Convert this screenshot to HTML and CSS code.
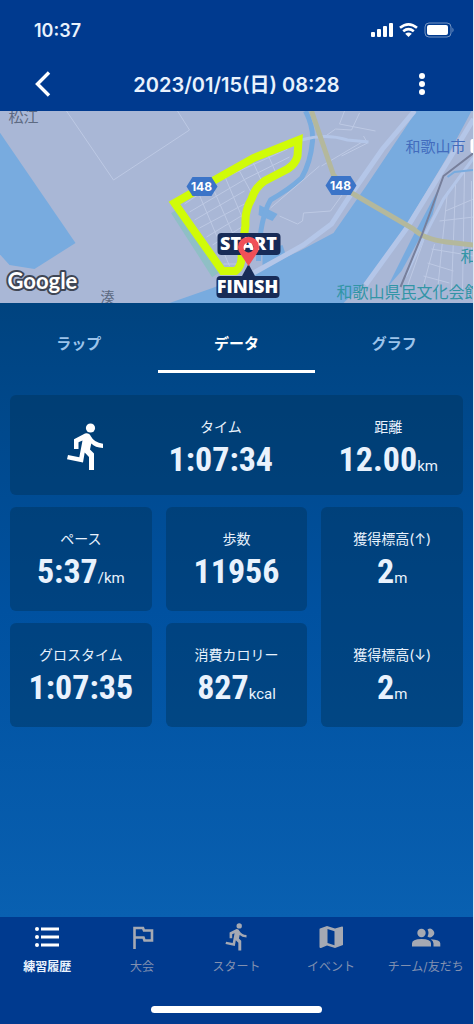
FILE: index.html
```
<!DOCTYPE html>
<html lang="ja">
<head>
    <meta charset="UTF-8">
    <meta name="viewport" content="width=device-width, initial-scale=1.0">
    <title>練習履歴</title>
    <link rel="stylesheet" href="styles.css">
</head>
<body>
    <div class="status-bar">
        <span class="clock">10:37</span>
        <svg class="status-icons" viewBox="0 0 84 16" aria-hidden="true">
            <g fill="#fff">
                <rect x="0" y="10" width="4" height="5" rx="1"/>
                <rect x="6" y="7" width="4" height="8" rx="1"/>
                <rect x="12" y="4" width="4" height="11" rx="1"/>
                <rect x="18" y="1" width="4" height="14" rx="1"/>
                <rect x="56" y="3" width="21" height="10" rx="2"/>
                <path d="M81.500 5.500q2 2.500 0 5z" opacity=".5"/>
                <path d="M37.500 15l-3.300-3.300q3.300-2.600 6.600 0z"/>
            </g>
            <path d="M29 5.800q8.500-7 17 0M32.200 9.300q5.300-4.300 10.600 0" fill="none" stroke="#fff" stroke-width="2.600"/>
            <rect x="54" y="1" width="26" height="14" rx="4" fill="none" stroke="#fff" opacity=".45"/>
        </svg>
    </div>

    <header>
        <button class="icon-button" type="button" aria-label="戻る">
            <svg width="24" height="28" viewBox="0 0 24 28"><path d="M18 2.500L6.500 14 18 25.500" fill="none" stroke="#fff" stroke-width="3.400"/></svg>
        </button>
        <h1>2023/01/15(日) 08:28</h1>
        <button class="icon-button" type="button" aria-label="メニュー">
            <svg width="24" height="28" viewBox="0 0 24 28" fill="#fff"><circle cx="12" cy="6" r="3"/><circle cx="12" cy="14" r="3"/><circle cx="12" cy="22" r="3"/></svg>
        </button>
    </header>

    <svg class="map" viewBox="0 0 474 192" preserveAspectRatio="xMidYMid slice" role="img" aria-label="ランニングコースの地図">
        <rect width="474" height="192" fill="#a9b7d6"/>
        <!-- water -->
        <g fill="#78abdf">
            <path d="M0 21L76 132 35 158 10 154 0 143z"/>
            <path d="M417 0H472L447 47 407 114 367 170 344 192H170L213 177 256 160 300 140 334 122 366 76z"/>
            <path d="M440 76L433 104 402 160 388 176 412 128z"/>
            <path d="M260 94l18 9-5 7-14-6z"/>
            <path d="M263 140l20-6 4 12-24 10z"/>
        </g>
        <path d="M306 0Q314 16 313 30 311 52 302 67 290 78 271 89 260 108 259 150" fill="none" stroke="#78abdf" stroke-width="5"/>
        <path d="M175 100L216 164" stroke="#8fbfc5" stroke-width="8"/>
        <!-- streets -->
        <g fill="none" stroke="#bdc9e4" stroke-width="1">
            <path d="M67 0L114 69 190 19 178 0"/>
            <path d="M185 93L222 68 288 38M190 101L246 68 290 46M195 109L245 80M200 117L245 93M207 126L245 103M213 134L244 115M219 144L243 128M224 153H243"/>
            <path d="M199 82L230 155M212 74L241 140M226 67L245 112M240 60L252 82M254 52L262 70M269 45L276 61"/>
            <path d="M322 28L336 18 352 19 360 2M345 0L340 13 376 20M322 55L366 29M364 25L368 32 342 45"/>
            <path d="M280 105L298 113 303 110 304 102 331 100M271 97L320 55M331 100L344 82"/>
            <path d="M446 100L474 88M440 110L474 106M432 138L474 145M428 152L454 160M424 165L450 172M448 80L438 180M456 74L452 180M465 60L463 180M472 70V140M424 130L408 175M435 133L423 178"/>
        </g>
        <g fill="none" stroke="#b4c6e8" stroke-width="5">
            <path d="M415 0L383 38 349 87 332 113 304 134 254 162"/>
            <path d="M474 8L448 51 408 116 366 174"/>
            <path d="M474 47L444 88 424 127 406 165" stroke-width="3"/>
            <path d="M302 29Q326 22 348 29L369 31" stroke-width="3"/>
        </g>
        <path d="M448 66L455 61 474 59" fill="none" stroke="#78abdf" stroke-width="2"/>
        <path d="M312 0L334 64 347 79 414 118 Q424 128 447 131L474 134" fill="none" stroke="#b4b89c" stroke-width="5"/>
        <path d="M474 42L444 65 422 125 401 176" fill="none" stroke="#777f9b" stroke-width="2"/>
        <!-- course -->
        <path d="M224 64L254 47 299 29 298 45 Q296 53 288 58L265 70 Q256 76 252 88 245 100 246 114L242 142 Q243 155 236 160H223L175 92z" fill="none" stroke="#d0fb08" stroke-width="8"/>
        <!-- route numbers -->
        <g class="route-number">
            <path d="M193 66h19l6 9.500-6 9.500h-19l-6-9.500z"/>
            <path d="M332 65h19l6 9.500-6 9.500h-19l-6-9.500z"/>
            <text x="202" y="80">148</text>
            <text x="341" y="79">148</text>
        </g>
        <g class="place">
            <text x="9" y="11" font-size="15">松江</text>
            <text x="101" y="191" font-size="14">湊</text>
            <text x="406" y="41" class="station">和歌山市</text>
            <text x="461" y="151" class="landmark">和</text>
            <text x="337" y="187" class="landmark">和歌山県民文化会館</text>
        </g>
        <rect x="471" y="28" width="6" height="14" rx="2" fill="#fff"/>
        <!-- start and finish markers -->
        <g class="marker">
            <rect x="218" y="122" width="63" height="22" rx="4"/>
            <rect x="217" y="165" width="63" height="22" rx="4"/>
            <path d="M242 166l7-13 7 13z"/>
            <text x="249" y="139">START</text>
            <text x="248" y="182">FINISH</text>
        </g>
        <path d="M249 155L241 143A10.500 10.500 0 1 1 257 143zM249 131.500a5 5 0 1 0 .1 0z" fill="#f05058" fill-rule="evenodd"/>
        <text class="google" x="8" y="178">Google</text>
    </svg>

    <main>
        <div class="tabs" role="tablist">
            <button type="button" role="tab" aria-selected="false">ラップ</button>
            <button type="button" role="tab" aria-selected="true" class="active">データ</button>
            <button type="button" role="tab" aria-selected="false">グラフ</button>
        </div>

        <section class="stats">
            <div class="card summary">
                <svg class="runner" viewBox="0 0 36 48" fill="#fff" aria-hidden="true"><use href="#runner"/></svg>
                <div class="stat">
                    <span class="label">タイム</span>
                    <span class="value">1:07:34</span>
                </div>
                <div class="stat">
                    <span class="label">距離</span>
                    <span class="value">12.00<small>km</small></span>
                </div>
            </div>
            <div class="card stat">
                <span class="label">ペース</span>
                <span class="value">5:37<small>/km</small></span>
            </div>
            <div class="card stat">
                <span class="label">歩数</span>
                <span class="value">11956</span>
            </div>
            <div class="card elevation">
                <div class="stat">
                    <span class="label">獲得標高(↑)</span>
                    <span class="value">2<small>m</small></span>
                </div>
                <div class="stat">
                    <span class="label">獲得標高(↓)</span>
                    <span class="value">2<small>m</small></span>
                </div>
            </div>
            <div class="card stat">
                <span class="label">グロスタイム</span>
                <span class="value">1:07:35</span>
            </div>
            <div class="card stat">
                <span class="label">消費カロリー</span>
                <span class="value">827<small>kcal</small></span>
            </div>
        </section>
    </main>

    <nav>
        <a href="#history" class="active">
            <svg viewBox="0 0 28 28"><circle cx="4" cy="6" r="2"/><circle cx="4" cy="14" r="2"/><circle cx="4" cy="22" r="2"/><path d="M8 4.500h18v3H8zM8 12.500h18v3H8zM8 20.500h18v3H8z"/></svg>
            練習履歴
        </a>
        <a href="#race">
            <svg viewBox="0 0 28 28"><path d="M6.500 26V5H15l1 2.500h8v10h-7.500l-1-3h-9" fill="none" stroke="currentColor" stroke-width="2.600"/></svg>
            大会
        </a>
        <a href="#start">
            <svg viewBox="0 0 36 48"><use href="#runner"/></svg>
            スタート
        </a>
        <a href="#event">
            <svg viewBox="0 0 28 28"><path fill-rule="evenodd" d="M3 5.500L10 3l8 2.500L25 3.500Q26 3.300 26 4.500V22L18 25l-8-2.500-6 2.500Q2.500 25.300 2.500 24V6.500Q2.500 5.700 3 5.500zM10.500 6v14l7 2.300V8.200z"/></svg>
            イベント
        </a>
        <a href="#team">
            <svg class="wide" viewBox="0 0 32 28"><circle cx="11.500" cy="10" r="4.200"/><path d="M17.500 6.600a4.200 4.200 0 1 1 0 6.800q2-3.400 0-6.800zM2 23.500v-3q0-4.500 9.500-4.500t9.500 4.500v3zM23.500 23.500v-3q0-2.600-2.700-4.300 9.500.3 9.500 4.300v3z"/></svg>
            チーム/友だち
        </a>
    </nav>
    <div class="home-indicator"></div>

    <svg width="0" height="0" class="symbols" aria-hidden="true">
        <defs>
            <g id="runner">
                <circle cx="23.500" cy="5" r="4.600"/>
                <path d="M18 10.500Q22 9.500 24 13.500 27 19.500 36 20.700V25Q28 24.500 24.300 20.500L23 26.500 27 30.500V47H22V34L17.700 29.500 16 39.500 0 36.200 1 32 12.300 34.200 15.500 17.500 11.500 19.200V26H7V16.200z"/>
            </g>
        </defs>
    </svg>
</body>
</html>
```
FILE: styles.css
```
* {
    box-sizing: border-box;
}

body {
    font-family: Inter, "Noto Sans CJK JP", sans-serif;
    background-color: #003a8f;
    color: #e9f2fd;
    margin: 0;
    min-height: 100vh;
    display: flex;
    flex-direction: column;
    border-right: 1px solid #dfe8f4;
}

button {
    font-family: inherit;
    color: inherit;
    background: none;
    border: none;
    padding: 0;
    cursor: pointer;
}

.status-bar {
    display: flex;
    align-items: center;
    justify-content: space-between;
    height: 56px;
    padding: 4px 18px 0 34px;
}

.clock {
    font-size: 18px;
    font-weight: 600;
}

.status-icons {
    width: 84px;
    height: 16px;
}

header {
    display: flex;
    align-items: center;
    justify-content: space-between;
    height: 55px;
    padding: 0 39px 0 31px;
}

h1 {
    margin: 0;
    padding-left: 8px;
    font-size: 20px;
    font-weight: 600;
}

.icon-button {
    display: flex;
}

.map {
    display: block;
    width: 100%;
    height: 192px;
}

.route-number {
    fill: #3b74c8;
}

.route-number text {
    fill: #fff;
    font-size: 12px;
    font-weight: 700;
    text-anchor: middle;
}

.place {
    fill: #5d6a82;
    font-size: 16px;
}

.place .station {
    fill: #426bbd;
    font-size: 15px;
}

.place .landmark {
    fill: #3295a6;
}

.marker {
    fill: #172b57;
}

.marker text {
    fill: #fff;
    font-family: "Open Sans", sans-serif;
    font-size: 18px;
    font-weight: 800;
    text-anchor: middle;
}

.google {
    fill: #fff;
    stroke: #3f4655;
    stroke-width: 4px;
    stroke-linejoin: round;
    paint-order: stroke;
    font-family: Lato, sans-serif;
    font-size: 22px;
    font-weight: 700;
}

main {
    flex: 1;
    background: linear-gradient(#00437f, #0051a0 50%, #0960b1);
}

.tabs {
    display: grid;
    grid-template-columns: repeat(3, 1fr);
}

.tabs button {
    height: 70px;
    padding-top: 12px;
    border-bottom: 3px solid transparent;
    color: #9cc3ea;
    font-size: 15px;
    font-weight: 600;
}

.tabs .active {
    color: #fff;
    border-bottom-color: #fff;
}

.stats {
    display: grid;
    grid-template-columns: repeat(3, 1fr);
    grid-template-rows: 100px 104px 104px;
    gap: 12px 14px;
    padding: 22px 10px;
}

.card {
    background-color: rgba(0, 53, 95, 0.48);
    border-radius: 6px;
}

.summary {
    grid-column: 1 / 4;
    display: flex;
    align-items: center;
    justify-content: space-between;
    padding: 3px 25px 0 57px;
}

.runner {
    width: 36px;
    height: 48px;
}

.stat {
    display: flex;
    flex-direction: column;
    align-items: center;
    justify-content: center;
    padding-top: 4px;
}

.label {
    font-size: 14px;
    line-height: 20px;
}

.value {
    font-family: "Roboto Condensed", "Liberation Sans Narrow", Roboto, sans-serif;
    font-size: 34px;
    font-weight: 700;
    line-height: 44px;
}

.value small {
    font-family: Roboto, sans-serif;
    font-size: 15px;
    font-weight: 400;
    line-height: 1;
}

.elevation {
    grid-column: 3;
    grid-row: 2 / 4;
    display: grid;
    grid-template-rows: 1fr 1fr;
    row-gap: 12px;
}

nav {
    display: grid;
    grid-template-columns: repeat(5, 1fr);
    padding-top: 6px;
}

nav a {
    display: flex;
    flex-direction: column;
    align-items: center;
    gap: 6px;
    color: #8190b0;
    font-size: 12px;
    line-height: 20px;
    text-decoration: none;
    white-space: nowrap;
}

nav svg {
    width: 28px;
    height: 28px;
    color: #a5a9b3;
    fill: currentColor;
}

nav .wide {
    width: 32px;
}

nav .active {
    color: #e9f2fd;
    font-weight: 600;
}

nav .active svg {
    color: #fff;
}

.home-indicator {
    width: 36%;
    height: 7px;
    margin: 29px auto 11px;
    border-radius: 4px;
    background-color: #fff;
}

.symbols {
    position: absolute;
}
```
